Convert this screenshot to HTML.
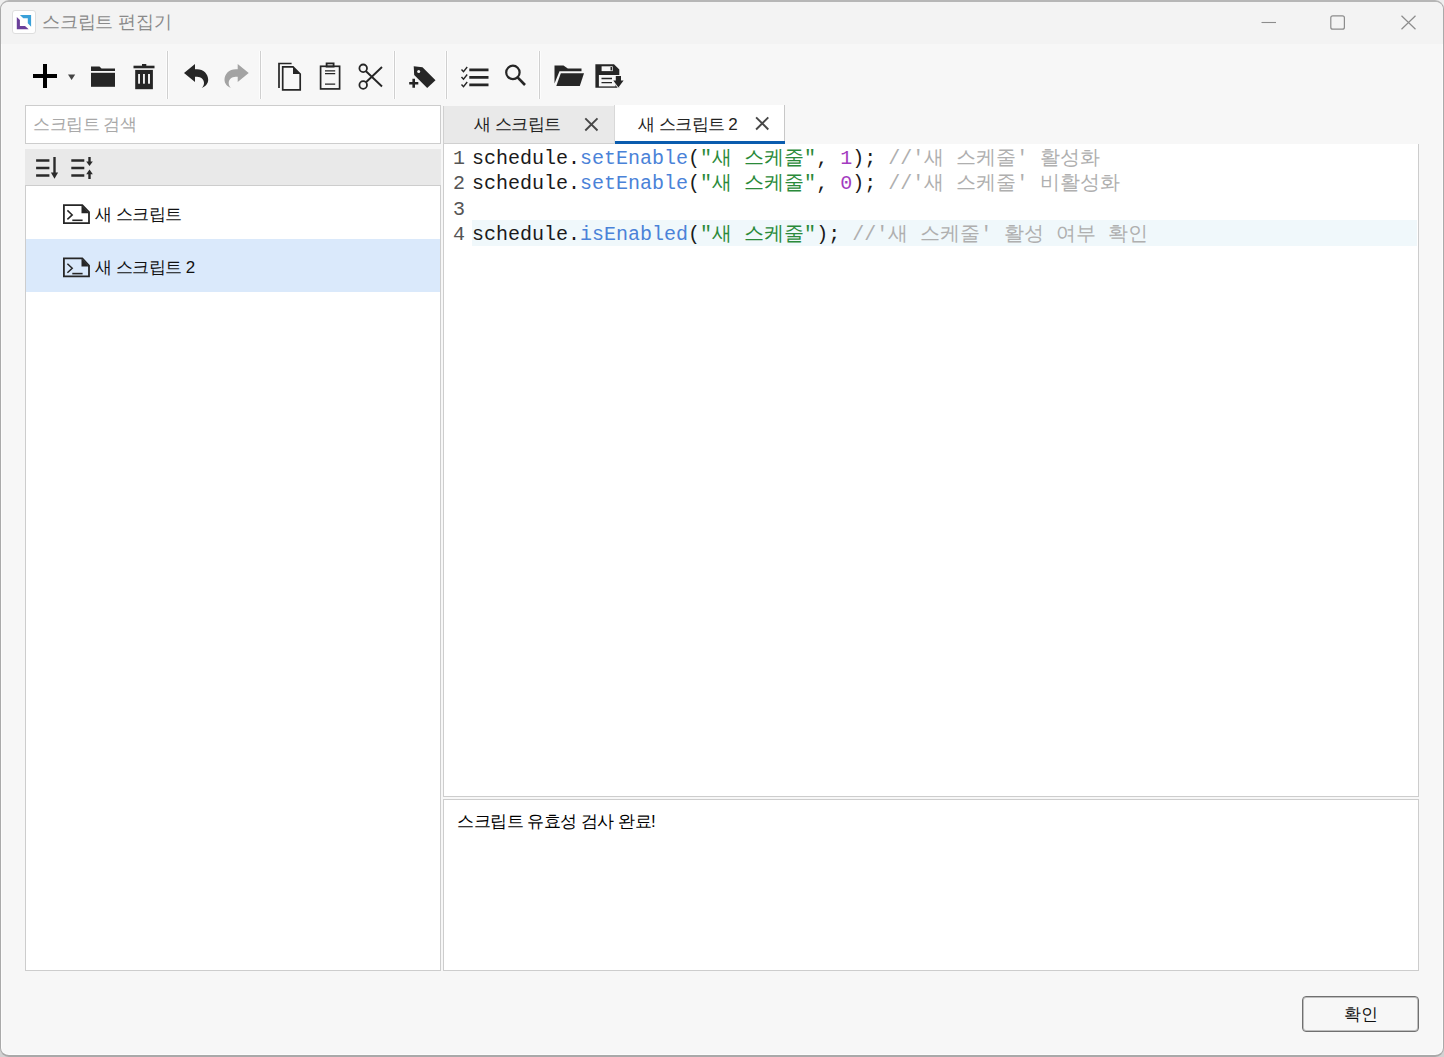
<!DOCTYPE html>
<html><head><meta charset="utf-8">
<style>
*{box-sizing:border-box;margin:0;padding:0}
html,body{width:1444px;height:1057px;overflow:hidden;background:linear-gradient(#eeeeee,#d2d2d2);font-family:"Liberation Sans",sans-serif}
.abs{position:absolute}
.t{position:absolute;white-space:nowrap;font-size:17px;line-height:20px;letter-spacing:-0.5px}
.kw{display:inline-block;white-space:nowrap}
#win{position:absolute;left:0;top:0;width:1444px;height:1057px;border:1px solid #aaaaaa;border-top:2px solid #b6b6b6;border-bottom:2px solid #a9a9a9;border-radius:9px;background:#f7f7f7;overflow:hidden;box-shadow:inset 0 0 0 1px #fcfcfc}
#title{position:absolute;left:0;top:0;width:1444px;height:42px;background:#f3f3f3}
.sep{position:absolute;top:51px;width:1px;height:48px;background:#d0d0d0;box-shadow:1px 0 0 #fdfdfd,-1px 0 0 #fdfdfd}
.panel{position:absolute;background:#fff;border:1px solid #cdcdcd}
.code{font-family:"Liberation Mono",monospace;font-size:20px;line-height:25.5px;white-space:pre}
.fn{color:#4a82d8}.st{color:#2a8a3a}.nu{color:#a33cc0}.cm{color:#afafaf}
</style></head><body>
<div id="win">
  <div id="title"></div>
</div>
<!-- title -->
<div class="abs" style="left:12px;top:10px;width:24px;height:24px;background:#fff;border:1px solid #dedede;border-radius:3px"></div>
<div class="t" style="left:42px;top:11px;font-size:18px;line-height:22px;color:#8a8a8a;letter-spacing:-0.2px">스크립트 편집기</div>

<!-- toolbar separators -->
<div class="sep" style="left:167px"></div>
<div class="sep" style="left:260px"></div>
<div class="sep" style="left:394px"></div>
<div class="sep" style="left:446px"></div>
<div class="sep" style="left:539px"></div>

<!-- search -->
<div class="panel" style="left:25px;top:105px;width:416px;height:39px"></div>
<div class="t" style="left:33px;top:115px;color:#a8a8a8">스크립트 검색</div>

<!-- sort bar -->
<div class="abs" style="left:25px;top:149px;width:416px;height:36px;background:#e9e9e9"></div>

<!-- list -->
<div class="panel" style="left:25px;top:185px;width:416px;height:786px"></div>
<div class="abs" style="left:26px;top:239px;width:414px;height:53px;background:#dae9fb"></div>
<div class="t" style="left:95px;top:205px;color:#111">새 스크립트</div>
<div class="t" style="left:95px;top:258px;color:#111"><span class="kw" style="width:86.5px">새 스크립트</span> 2</div>

<!-- tabs -->
<div class="abs" style="left:443px;top:106px;width:171px;height:38px;background:#e9e9e9;border-bottom:1px solid #d0d0d0;border-left:1px solid #d0d0d0"></div>
<div class="abs" style="left:614px;top:105px;width:171px;height:39px;background:#fff;border-right:1px solid #c8c8c8;border-left:1px solid #d8d8d8"></div>
<div class="abs" style="left:615px;top:141px;width:170px;height:3px;background:#0a5cae"></div>
<div class="t" style="left:474px;top:114.5px;color:#222">새 스크립트</div>
<div class="t" style="left:638px;top:114.5px;color:#222"><span class="kw" style="width:86px">새 스크립트</span> 2</div>

<!-- editor -->
<div class="panel" style="left:443px;top:144px;width:976px;height:653px;border-top:none"></div>


<!-- code -->
<div class="abs" style="left:472px;top:220px;width:945px;height:26px;background:#f0f8fb"></div>
<div class="abs code" style="left:453px;top:145.5px;color:#555">1<br>2<br>3<br>4</div>
<div class="abs code" style="left:472px;top:145.5px;color:#1a1a1a">schedule.<span class="fn">setEnable</span>(<span class="st">"<span class="kw" style="width:20px">새</span> <span class="kw" style="width:60px">스케줄</span>"</span>, <span class="nu">1</span>); <span class="cm">//'<span class="kw" style="width:20px">새</span> <span class="kw" style="width:60px">스케줄</span>' <span class="kw" style="width:60px">활성화</span></span>
schedule.<span class="fn">setEnable</span>(<span class="st">"<span class="kw" style="width:20px">새</span> <span class="kw" style="width:60px">스케줄</span>"</span>, <span class="nu">0</span>); <span class="cm">//'<span class="kw" style="width:20px">새</span> <span class="kw" style="width:60px">스케줄</span>' <span class="kw" style="width:80px">비활성화</span></span>

schedule.<span class="fn">isEnabled</span>(<span class="st">"<span class="kw" style="width:20px">새</span> <span class="kw" style="width:60px">스케줄</span>"</span>); <span class="cm">//'<span class="kw" style="width:20px">새</span> <span class="kw" style="width:60px">스케줄</span>' <span class="kw" style="width:40px">활성</span> <span class="kw" style="width:40px">여부</span> <span class="kw" style="width:40px">확인</span></span></div>

<!-- output -->
<div class="panel" style="left:443px;top:799px;width:976px;height:172px"></div>
<div class="t" style="left:457px;top:811.5px;color:#000"><span class="kw" style="width:194px">스크립트 유효성 검사 완료</span>!</div>

<!-- button -->
<div class="abs" style="left:1302px;top:996px;width:117px;height:36px;border:1px solid #707070;box-shadow:inset 0 0 0 1px rgba(120,120,120,.45);border-radius:4px;background:#f7f7f7"></div>
<div class="t" style="left:1302px;top:1005px;width:117px;text-align:center;color:#111">확인</div>

<svg class="abs" style="left:0;top:0" width="1444" height="300" viewBox="0 0 1444 300">
 <!-- app icon -->
 <polygon points="19.9,15.1 31.1,15.1 31.1,26.7 27.8,23.3 27.8,18.2 23.3,18.2" fill="#3aa0d8"/>
 <polygon points="16.8,17 19.9,19.9 19.9,25.9 25,25.9 28.7,29.3 16.8,29.3" fill="#6a3f9a"/>
 <!-- window controls -->
 <line x1="1261.5" y1="22.5" x2="1276" y2="22.5" stroke="#8c8c8c" stroke-width="1.1"/>
 <rect x="1330.8" y="15.8" width="13.6" height="13.4" rx="2" fill="none" stroke="#8c8c8c" stroke-width="1.2"/>
 <path d="M1401.5 15.8 L1415.5 29.3 M1415.5 15.8 L1401.5 29.3" stroke="#8c8c8c" stroke-width="1.2"/>
 <!-- plus -->
 <rect x="33" y="74" width="24" height="4" fill="#000"/>
 <rect x="43" y="64" width="4" height="24" fill="#000"/>
 <polygon points="68,74.5 75.2,74.5 71.6,80" fill="#444"/>
 <!-- folder -->
 <path d="M91 66.5 H99.5 L101.5 68.5 H115 V71 H91 Z" fill="#262626"/>
 <rect x="91" y="72.8" width="24" height="14" fill="#262626"/>
 <!-- trash -->
 <rect x="133.5" y="65.7" width="21" height="2.6" fill="#262626"/>
 <rect x="142" y="64" width="4.3" height="2" fill="#262626"/>
 <rect x="135.2" y="69.9" width="17.7" height="19.3" fill="#262626"/>
 <rect x="138.1" y="74" width="1.9" height="9.7" fill="#eee"/>
 <rect x="143" y="74" width="1.9" height="9.7" fill="#eee"/>
 <rect x="148" y="74" width="2" height="9.7" fill="#eee"/>
 <!-- undo -->
 <path id="undo" d="M184 73 L195 64 V69.3 H197 C203.5 69.3 208.2 74 208.2 79.8 C208.2 83.5 205.5 86.6 201.8 88 C203.4 86.2 204 84.6 204 83 C204 79.6 201 76.8 197 76.8 H195 V82 Z" fill="#262626"/>
 <path d="M184 73 L195 64 V69.3 H197 C203.5 69.3 208.2 74 208.2 79.8 C208.2 83.5 205.5 86.6 201.8 88 C203.4 86.2 204 84.6 204 83 C204 79.6 201 76.8 197 76.8 H195 V82 Z" fill="#a3a3a3" transform="translate(432.7,0) scale(-1,1)"/>
 <!-- copy -->
 <path d="M279 88 V63.5 H291.6" fill="none" stroke="#262626" stroke-width="1.7"/>
 <path d="M282.7 66.8 H293 L300.2 74 V89.8 H282.7 Z" fill="none" stroke="#262626" stroke-width="1.7"/>
 <polygon points="293,66.8 293,74 300.2,74" fill="#262626"/>
 <!-- clipboard -->
 <rect x="320.6" y="66.3" width="19" height="22.6" fill="none" stroke="#262626" stroke-width="1.7"/>
 <rect x="326.6" y="63.4" width="7" height="3.2" fill="none" stroke="#262626" stroke-width="1.8"/>
 <path d="M325 70.9 H335.2 M325 73.6 H335.2 M325 84.2 H335.2" stroke="#262626" stroke-width="1.3"/>
 <!-- scissors -->
 <circle cx="363.2" cy="68.3" r="3.8" fill="none" stroke="#262626" stroke-width="1.8"/>
 <circle cx="363.2" cy="85" r="3.8" fill="none" stroke="#262626" stroke-width="1.8"/>
 <path d="M366 71.2 L382 86.5 M366 82.2 L382 67" stroke="#262626" stroke-width="1.9"/>
 <!-- tag -->
 <polygon points="413.7,66.3 422.5,67.3 435.5,80.3 427.2,88.1 414.2,75.1" fill="#262626"/>
 <circle cx="418.7" cy="71.6" r="1.5" fill="#f7f7f7"/>
 <path d="M408 83.3 H419.5 M413.7 77.5 V89" stroke="#f7f7f7" stroke-width="5"/>
 <path d="M409.2 83.3 H418.3 M413.7 78.8 V87.8" stroke="#262626" stroke-width="2.6"/>
 <!-- checklist -->
 <path d="M461.5 69.5 L463.5 71.7 L467.2 67 M461.5 77 L463.5 79.2 L467.2 74.5 M461.5 84.5 L463.5 86.7 L467.2 82" fill="none" stroke="#262626" stroke-width="1.4"/>
 <path d="M469.3 69.8 H488.5 M469.3 77.3 H488.5 M469.3 84.9 H488.5" stroke="#262626" stroke-width="2.8"/>
 <!-- search -->
 <circle cx="512.9" cy="72.4" r="6.7" fill="none" stroke="#262626" stroke-width="2.2"/>
 <path d="M517.6 77.3 L525 85" stroke="#262626" stroke-width="2.6"/>
 <!-- open folder -->
 <path d="M554.5 65.6 H563.5 L567.8 68.5 H581.5 V71.2 H559.5 L554.5 83.5 Z" fill="#262626"/>
 <polygon points="560.8,73.2 584,73.2 579.8,86 556.3,86" fill="#262626"/>
 <!-- save -->
 <path d="M595.4 64.2 H614 L619.3 69.5 V87.7 H595.4 Z" fill="#262626"/>
 <rect x="601.6" y="66.3" width="11.1" height="4.8" fill="#f7f7f7"/>
 <rect x="610.5" y="67" width="1.5" height="3.4" fill="#262626"/>
 <rect x="598.9" y="75" width="16.6" height="11.4" fill="#f7f7f7"/>
 <path d="M601.5 78.5 H612 M601.5 82.6 H612" stroke="#262626" stroke-width="1.4"/>
 <path d="M614.8 75 H622 V80 H625 L618.4 89 L612 80 H614.8 Z" fill="#f7f7f7"/>
 <path d="M615.8 76 H621 V80.6 H623.6 L618.4 87.6 L613.3 80.6 H615.8 Z" fill="#262626"/>
 <!-- sort icons -->
 <path d="M36.1 160.5 H49.4 M36.1 168 H49.4 M36.1 175.5 H49.4" stroke="#2a2a2a" stroke-width="2.7"/>
 <rect x="53.3" y="157" width="2.4" height="16" fill="#2a2a2a"/>
 <polygon points="50.9,172.5 58.1,172.5 54.5,178.8" fill="#2a2a2a"/>
 <path d="M71.3 160.5 H84.3 M71.3 168 H84.3 M71.3 175.5 H84.3" stroke="#2a2a2a" stroke-width="2.7"/>
 <rect x="88.3" y="157" width="2.4" height="5" fill="#2a2a2a"/>
 <polygon points="86.2,161.5 92.8,161.5 89.5,166" fill="#2a2a2a"/>
 <rect x="88.3" y="174" width="2.4" height="5" fill="#2a2a2a"/>
 <polygon points="86.2,174.3 92.8,174.3 89.5,169.6" fill="#2a2a2a"/>
 <!-- list item icons -->
 <g id="ti" fill="none" stroke="#262626">
  <path d="M63.9 205.1 H82.3 L89 212.2 V223.1 H63.9 Z" stroke-width="1.8"/>
  <polygon points="81.5,205.1 81.5,213.2 89,213.2" fill="#262626" stroke="none"/>
  <path d="M67.4 210.4 L72.2 214.9 L67.4 219.4" stroke-width="1.5"/>
  <path d="M72.3 220.3 H82.6" stroke-width="1.6"/>
 </g>
 <use href="#ti" y="53.3"/>
 <!-- tab close -->
 <path d="M585.3 118.3 L597.5 130.5 M597.5 118.3 L585.3 130.5" stroke="#474747" stroke-width="1.9"/>
 <path d="M756.1 117.3 L768.3 129.5 M768.3 117.3 L756.1 129.5" stroke="#474747" stroke-width="1.9"/>
</svg>
</body></html>
